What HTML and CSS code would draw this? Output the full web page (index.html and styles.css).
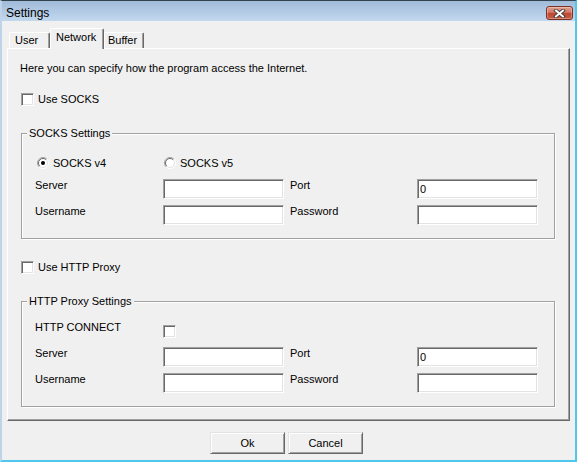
FILE: index.html
```html
<!DOCTYPE html>
<html>
<head>
<meta charset="utf-8">
<title>Settings</title>
<link rel="stylesheet" href="styles.css">
</head>
<body>
<div class="window">
  <div class="titlebar">
    <span class="title">Settings</span>
    <button class="close" aria-label="Close">
      <svg width="13" height="9" viewBox="0 0 13 9">
        <path d="M3 1.6L10 7.4M10 1.6L3 7.4" stroke="#3b3b3b" stroke-width="3.8" stroke-linecap="square" fill="none"/>
        <path d="M3 1.6L10 7.4M10 1.6L3 7.4" stroke="#ffffff" stroke-width="2" stroke-linecap="square" fill="none"/>
      </svg>
    </button>
  </div>
  <div class="client">
    <div class="tabs">
      <div class="tab tab-user">User</div>
      <div class="tab tab-network active">Network</div>
      <div class="tab tab-buffer">Buffer</div>
    </div>
    <div class="panel">
      <p class="intro">Here you can specify how the program access the Internet.</p>
      <div class="check-row"><span class="checkbox"></span>Use SOCKS</div>
      <fieldset class="group">
        <legend>SOCKS Settings</legend>
        <div class="grid grid-socks">
          <div class="radio-item first">
            <svg class="radio" width="12" height="12" viewBox="0 0 12 12">
              <circle cx="6" cy="6" r="5" fill="#fff"/>
              <path d="M9.9 2.1A5.5 5.5 0 0 0 2.1 9.9" stroke="#a0a0a0" fill="none"/>
              <path d="M2.1 9.9A5.5 5.5 0 0 0 9.9 2.1" stroke="#ffffff" fill="none"/>
              <path d="M9.2 2.8A4.5 4.5 0 0 0 2.8 9.2" stroke="#696969" fill="none"/>
              <path d="M2.8 9.2A4.5 4.5 0 0 0 9.2 2.8" stroke="#e3e3e3" fill="none"/>
              <circle cx="6" cy="6" r="2" fill="#000"/>
            </svg>
            <span>SOCKS v4</span>
          </div>
          <div class="radio-item second">
            <svg class="radio" width="12" height="12" viewBox="0 0 12 12">
              <circle cx="6" cy="6" r="5" fill="#fff"/>
              <path d="M9.9 2.1A5.5 5.5 0 0 0 2.1 9.9" stroke="#a0a0a0" fill="none"/>
              <path d="M2.1 9.9A5.5 5.5 0 0 0 9.9 2.1" stroke="#ffffff" fill="none"/>
              <path d="M9.2 2.8A4.5 4.5 0 0 0 2.8 9.2" stroke="#696969" fill="none"/>
              <path d="M2.8 9.2A4.5 4.5 0 0 0 9.2 2.8" stroke="#e3e3e3" fill="none"/>
            </svg>
            <span>SOCKS v5</span>
          </div>
          <div></div><div></div>
          <span class="lbl">Server</span>
          <input class="field" type="text" value="">
          <span class="lbl lbl2">Port</span>
          <input class="field" type="text" value="0">
          <span class="lbl">Username</span>
          <input class="field" type="text" value="">
          <span class="lbl lbl2">Password</span>
          <input class="field" type="text" value="">
        </div>
      </fieldset>
      <div class="check-row second-check"><span class="checkbox"></span>Use HTTP Proxy</div>
      <fieldset class="group group-http">
        <legend>HTTP Proxy Settings</legend>
        <div class="grid grid-http">
          <span class="lbl">HTTP CONNECT</span>
          <span class="checkbox inline-check"></span>
          <div></div><div></div>
          <span class="lbl">Server</span>
          <input class="field" type="text" value="">
          <span class="lbl lbl2">Port</span>
          <input class="field" type="text" value="0">
          <span class="lbl">Username</span>
          <input class="field" type="text" value="">
          <span class="lbl lbl2">Password</span>
          <input class="field" type="text" value="">
        </div>
      </fieldset>
    </div>
    <div class="buttons">
      <button class="btn">Ok</button>
      <button class="btn">Cancel</button>
    </div>
  </div>
</div>
</body>
</html>
```
FILE: styles.css
```css
html, body {
  margin: 0;
  padding: 0;
}
body {
  width: 577px;
  height: 462px;
  overflow: hidden;
  font-family: "Liberation Sans", Arial, sans-serif;
  font-size: 11px;
  color: #000;
  background: #f0f0f0;
}
.window {
  box-sizing: border-box;
  width: 577px;
  height: 462px;
  border-top: 1px solid #33424f;
  border-left: 2px solid #bfd4ea;
  border-right: 2px solid #4ec6ee;
  border-bottom: 2px solid #4ec6ee;
  background: #f0f0f0;
}
.titlebar {
  box-sizing: border-box;
  height: 20px;
  display: flex;
  justify-content: space-between;
  align-items: flex-start;
  padding: 5px 2px 0 4px;
  background: linear-gradient(#a0bbd9, #c3d8ee);
}
.title {
  font-size: 12px;
  line-height: 14px;
}
.close {
  box-sizing: border-box;
  width: 27px;
  height: 14px;
  padding: 0;
  border: 1px solid #7c3024;
  border-radius: 3px;
  background: linear-gradient(#e2a093 0%, #d27763 45%, #bd4631 52%, #c85d45 100%);
  box-shadow: inset 0 0 0 1px rgba(255, 255, 255, 0.3);
  display: flex;
  align-items: center;
  justify-content: center;
}
.close svg {
  display: block;
}
.client {
  padding: 0 5px;
}
.tabs {
  display: flex;
  align-items: flex-end;
  height: 27px;
  padding-left: 2px;
}
.tab {
  box-sizing: border-box;
  height: 16px;
  border-top: 1px solid #fff;
  border-left: 1px solid #fff;
  border-right: 1px solid #696969;
  box-shadow: inset -1px 0 #a0a0a0;
  border-radius: 2px 2px 0 0;
  padding-top: 1px;
  line-height: 13px;
  background: #f0f0f0;
}
.tab-user {
  width: 41px;
  padding-left: 5px;
}
.tab-network {
  width: 54px;
  padding-left: 5px;
}
.tab-buffer {
  width: 40px;
  padding-left: 3px;
}
.tab.active {
  height: 21px;
  margin-bottom: -1px;
  padding-top: 2px;
  position: relative;
  z-index: 1;
}
.panel {
  box-sizing: border-box;
  height: 373px;
  border: 1px solid;
  border-color: #fff #696969 #696969 #fff;
  box-shadow: inset -1px -1px #a0a0a0;
  padding: 13px 0 0 12px;
}
.intro {
  margin: 0;
  line-height: 13px;
}
.check-row {
  display: flex;
  align-items: center;
  height: 13px;
  line-height: 13px;
  margin: 18px 0 0 1px;
}
.second-check {
  margin-top: 22px;
}
.checkbox {
  box-sizing: border-box;
  display: block;
  width: 13px;
  height: 13px;
  border: 1px solid;
  border-color: #a0a0a0 #fff #fff #a0a0a0;
  box-shadow: inset 1px 1px #696969, inset -1px -1px #e3e3e3;
  background: #fff;
  margin-right: 4px;
}
.group {
  box-sizing: border-box;
  width: 534px;
  margin: 21px 0 0 1px;
  padding: 17px 0 13px 0;
  border: 1px solid #a0a0a0;
  box-shadow: inset 1px 1px #fff, 1px 1px #fff;
  min-inline-size: 0;
}
.group-http {
  padding-top: 13px;
}
.group legend {
  padding: 0 2px;
  margin-left: 5px;
  line-height: 13px;
  background: #f0f0f0;
}
.grid {
  display: grid;
  grid-template-columns: 128px 121px 133px 121px;
  row-gap: 6px;
  margin-left: 13px;
}
.grid-socks {
  grid-template-rows: 16px 20px 20px;
}
.grid-http {
  grid-template-rows: 20px 20px 20px;
}
.radio-item {
  display: flex;
  align-items: center;
  align-self: start;
  height: 12px;
  line-height: 12px;
}
.radio-item.first {
  margin-left: 2px;
}
.radio-item.second {
  margin-left: 1px;
}
.radio {
  display: block;
  margin-right: 4px;
}
.lbl {
  align-self: start;
  line-height: 13px;
}
.lbl2 {
  padding-left: 6px;
}
.inline-check {
  align-self: start;
  margin-top: 4px;
}
.field {
  box-sizing: border-box;
  width: 121px;
  height: 20px;
  margin: 0;
  border: 1px solid;
  border-color: #a0a0a0 #fff #fff #a0a0a0;
  box-shadow: inset 1px 1px #696969, inset -1px -1px #e3e3e3;
  background: #fff;
  padding: 0 0 0 2px;
  font-family: "Liberation Sans", Arial, sans-serif;
  font-size: 11px;
  color: #000;
  outline: none;
}
.buttons {
  display: flex;
  gap: 3px;
  margin-top: 11px;
  padding-left: 203px;
}
.btn {
  box-sizing: border-box;
  width: 75px;
  height: 22px;
  margin: 0;
  padding: 0;
  border: 1px solid;
  border-color: #e3e3e3 #696969 #696969 #e3e3e3;
  box-shadow: inset 1px 1px #fff, inset -1px -1px #a0a0a0;
  background: #f0f0f0;
  font-family: "Liberation Sans", Arial, sans-serif;
  font-size: 11px;
  color: #000;
}
```
